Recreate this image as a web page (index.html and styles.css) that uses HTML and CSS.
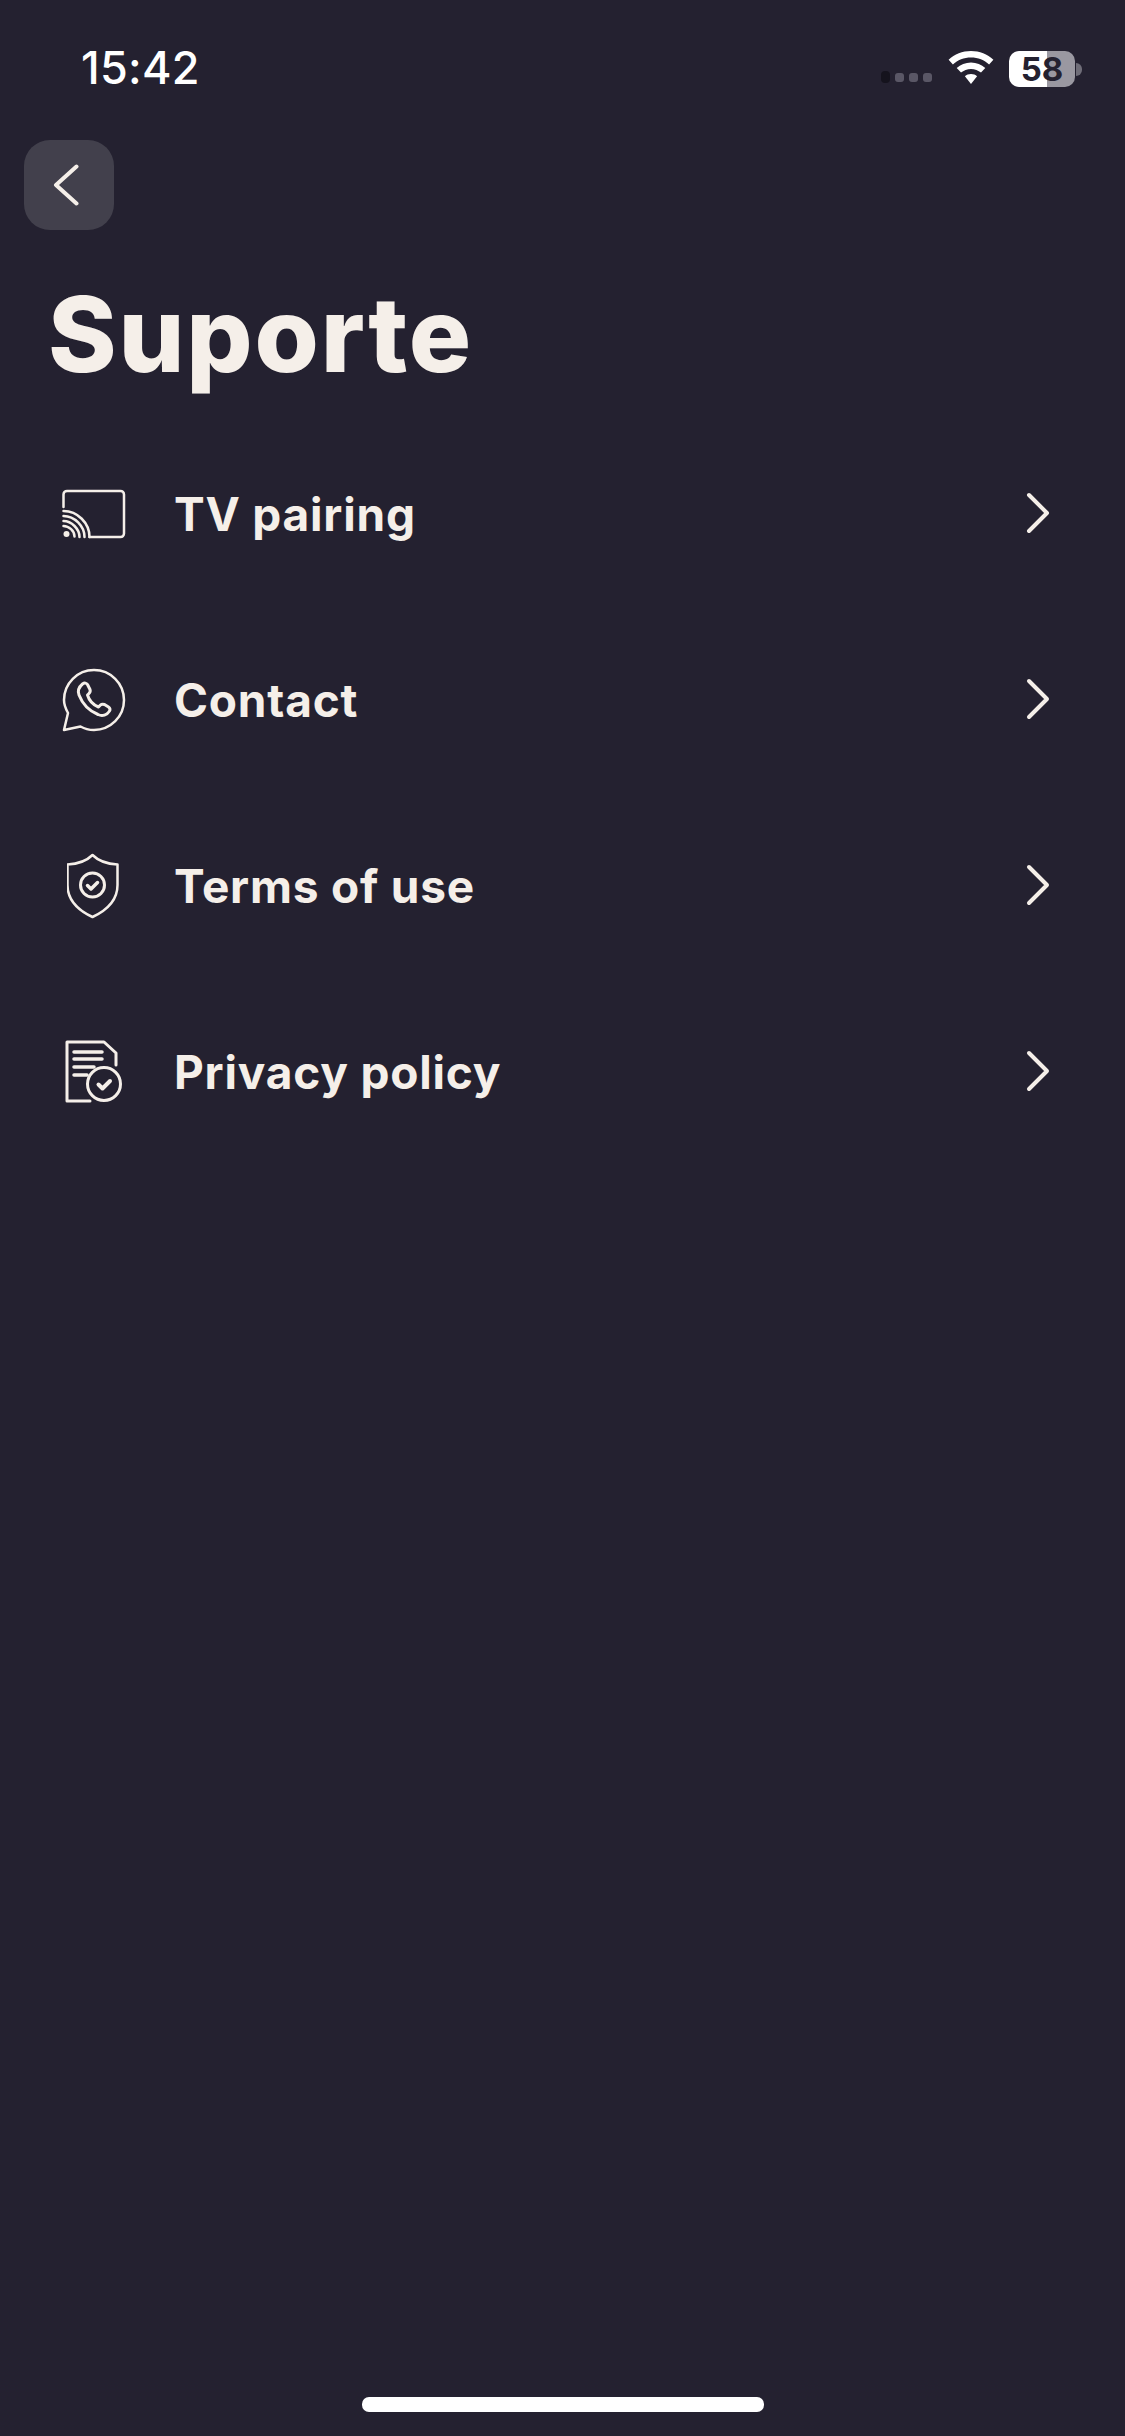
FILE: index.html
```html
<!DOCTYPE html>
<html lang="pt">
<head>
<meta charset="UTF-8" />
<meta name="viewport" content="width=device-width, initial-scale=1" />
<title>Suporte</title>
<link rel="stylesheet" href="styles.css">
</head>
<body>

<div class="screen">
  <!-- Status bar -->
  <div class="status-bar">
    <span class="status-time">15:42</span>
    <div class="status-icons">
      <div class="signal">
        <span class="signal-dot signal-dot-first"></span>
        <span class="signal-dot"></span>
        <span class="signal-dot"></span>
        <span class="signal-dot"></span>
      </div>
      <svg class="wifi" width="46" height="36" viewBox="0 0 46 36">
        <path d="M23 0C14.400 0 6.500 3.300.6 8.800L4.900 13.400C9.600 9 16 6.400 23 6.400S36.400 9 41.100 13.400L45.400 8.800C39.500 3.300 31.600 0 23 0Z" fill="#fff"/>
        <path d="M23 11.500C17.500 11.500 12.500 13.600 8.700 17L13 21.600C15.700 19.300 19.200 17.900 23 17.900S30.300 19.300 33 21.600L37.300 17C33.500 13.600 28.500 11.500 23 11.500Z" fill="#fff"/>
        <path d="M23 23C20.600 23 18.500 23.900 16.900 25.300L23 33L29.100 25.300C27.500 23.900 25.400 23 23 23Z" fill="#fff"/>
      </svg>
      <div class="battery">
        <div class="battery-body">58</div>
        <span class="battery-nub"></span>
      </div>
    </div>
  </div>

  <button class="back-btn" aria-label="Back">
    <svg width="26" height="42" viewBox="0 0 26 42" fill="none">
      <path d="M23.500 2.500L3 21L23.500 39.500" stroke="#f5efe9" stroke-width="4" stroke-linecap="round" stroke-linejoin="round"/>
    </svg>
  </button>

  <h1 class="page-title">Suporte</h1>

  <ul class="menu">
    <li class="menu-row">
      <span class="menu-icon">
        <svg width="66" height="52" viewBox="0 0 66 52" fill="none" stroke="#f5efe9" stroke-width="2.500" stroke-linecap="round">
          <path d="M2.500 19V6.500C2.500 4.500 4 3 6 3H59.500C61.500 3 63 4.500 63 6.500V45.500C63 47.500 61.500 49 59.500 49H28.500"/>
          <path d="M2.500 23C16.500 23 28.500 35 28.500 49"/>
          <path d="M2.500 28C13.500 28 23.500 38 23.500 49"/>
          <path d="M2.500 33C10.500 33 18.500 41 18.500 49"/>
          <path d="M2.500 38C8 38 13.500 43 13.500 48.500"/>
          <circle cx="5.500" cy="46" r="3" fill="#f5efe9" stroke="none"/>
        </svg>
      </span>
      <span class="menu-label">TV pairing</span>
      <svg class="menu-chevron" width="26" height="44" viewBox="0 0 26 44" fill="none">
        <path d="M3 3L21 21L3 39" stroke="#f5efe9" stroke-width="4" stroke-linecap="round" stroke-linejoin="round"/>
      </svg>
    </li>
    <li class="menu-row">
      <span class="menu-icon">
        <svg width="66" height="66" viewBox="0 0 66 66" fill="none" stroke="#f5efe9" stroke-width="2.500" stroke-linejoin="round" stroke-linecap="round">
          <path d="M3 63L7 46C4.500 41.500 3 37 3 33C3 16.400 16.400 3 33 3S63 16.400 63 33S49.600 63 33 63C28 63 23.500 61.800 19.500 59.500Z"/>
          <path d="M21.500 17C23.500 15.500 25.500 16 26.500 17.500L29 22.500C29.500 24 29 25.500 28 26.500L26.500 28C28 33 32.500 38 37.500 40L39.500 38C40.500 37 42 37 43.500 37.500L47.500 40C49 41 49.500 42.500 48.500 44C46 48 41.500 49.500 37 47.500C28.500 44 21.500 37 18 28C16.500 24 18 20 21.500 17Z" stroke-width="3"/>
        </svg>
      </span>
      <span class="menu-label">Contact</span>
      <svg class="menu-chevron" width="26" height="44" viewBox="0 0 26 44" fill="none">
        <path d="M3 3L21 21L3 39" stroke="#f5efe9" stroke-width="4" stroke-linecap="round" stroke-linejoin="round"/>
      </svg>
    </li>
    <li class="menu-row">
      <span class="menu-icon">
        <svg width="54" height="66" viewBox="1.500 0 54 66" fill="none" stroke="#f5efe9" stroke-width="2.500" stroke-linejoin="round" stroke-linecap="round">
          <path d="M27 2C21 8 12 11 2 11.500V32C2 47 12 57 27 64C42 57 52 47 52 32V11.500C42 11 33 8 27 2Z"/>
          <circle cx="27" cy="32" r="12" stroke-width="3"/>
          <path d="M22 32.500L25.500 36L32 29.500" stroke-width="3.500"/>
        </svg>
      </span>
      <span class="menu-label">Terms of use</span>
      <svg class="menu-chevron" width="26" height="44" viewBox="0 0 26 44" fill="none">
        <path d="M3 3L21 21L3 39" stroke="#f5efe9" stroke-width="4" stroke-linecap="round" stroke-linejoin="round"/>
      </svg>
    </li>
    <li class="menu-row">
      <span class="menu-icon">
        <svg width="60" height="64" viewBox="0 0 60 64" fill="none" stroke="#f5efe9" stroke-width="2.500" stroke-linejoin="round" stroke-linecap="round">
          <path d="M26 61H3V2H40L52 13V25" stroke-width="3"/>
          <path d="M10 12H38M10 19H38M10 27H30M10 35H23" stroke-width="3.500"/>
          <circle cx="40" cy="44" r="16.500" stroke-width="3"/>
          <path d="M34.500 44.500L38.500 48.500L46 41" stroke-width="4"/>
        </svg>
      </span>
      <span class="menu-label">Privacy policy</span>
      <svg class="menu-chevron" width="26" height="44" viewBox="0 0 26 44" fill="none">
        <path d="M3 3L21 21L3 39" stroke="#f5efe9" stroke-width="4" stroke-linecap="round" stroke-linejoin="round"/>
      </svg>
    </li>
  </ul>

  <div class="home-indicator"></div>
</div>

</body>
</html>
```

FILE: styles.css
```css
* {
  box-sizing: border-box;
}

html, body {
  margin: 0;
  padding: 0;
  background: #242130;
}

.screen {
  width: 1125px;
  height: 2436px;
  position: relative;
  overflow: hidden;
  background: #242130;
  color: #f5efe9;
  font-family: Inter, "Liberation Sans", sans-serif;
}

/* Status bar */
.status-bar {
  height: 140px;
  padding: 44px 43px 0 81px;
  display: flex;
  justify-content: space-between;
  align-items: flex-start;
}

.status-time {
  font-size: 45px;
  line-height: 48px;
  font-weight: 500;
  letter-spacing: 0.300px;
  color: #fff;
}

.status-icons {
  display: flex;
  align-items: flex-start;
  margin-top: 7px;
}

.signal {
  display: flex;
  align-items: center;
  gap: 5px;
  margin: 20px 16px 0 0;
}

.signal-dot {
  width: 9px;
  height: 9px;
  border-radius: 3px;
  background: #5a5766;
}

.signal-dot-first {
  height: 12px;
  border-radius: 4px;
  background: #15131d;
}

.wifi {
  margin-right: 15px;
}

.battery {
  display: flex;
  align-items: center;
}

.battery-body {
  width: 66px;
  height: 36px;
  border-radius: 10px;
  background: linear-gradient(to right, #fff 0, #fff 58%, #9a98a1 58%, #9a98a1 100%);
  color: #242130;
  font-size: 33px;
  font-weight: 700;
  line-height: 36px;
  text-align: center;
}

.battery-nub {
  width: 6px;
  height: 13px;
  margin-left: 1px;
  border-radius: 0 6px 6px 0;
  background: #6f6d78;
}

/* Back button */
.back-btn {
  display: flex;
  align-items: center;
  justify-content: center;
  width: 90px;
  height: 90px;
  margin-left: 24px;
  padding: 0 6px 0 0;
  border: none;
  border-radius: 26px;
  background: #42404c;
}

.page-title {
  margin: 44px 0 0 48px;
  font-size: 104px;
  line-height: 120px;
  font-weight: 800;
  letter-spacing: 1.800px;
  color: #f5efe9;
}

/* Menu list */
.menu {
  list-style: none;
  margin: 27px 0 0;
  padding: 0 73px 0 61px;
}

.menu-row {
  display: flex;
  align-items: center;
  height: 186px;
}

.menu-icon {
  display: flex;
  align-items: center;
  justify-content: center;
  width: 66px;
  margin-right: 47px;
}

.menu-label {
  flex: 1;
  font-size: 46px;
  font-weight: 700;
  letter-spacing: 0.800px;
  color: #f5efe9;
}

.home-indicator {
  position: absolute;
  left: 362px;
  bottom: 24px;
  width: 402px;
  height: 15px;
  border-radius: 7px;
  background: #fff;
}
```
